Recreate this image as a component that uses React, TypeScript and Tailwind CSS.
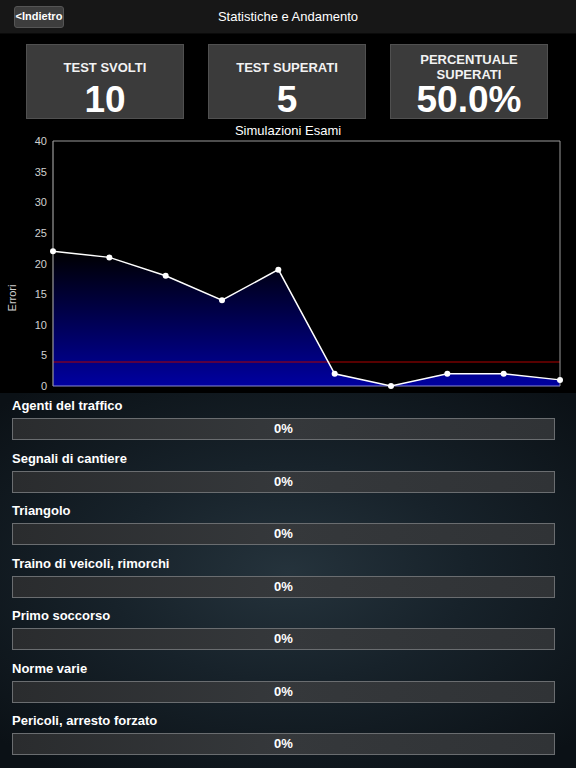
import React from 'react';

const stats = [
    { title: ['TEST SVOLTI'], value: '10' },
    { title: ['TEST SUPERATI'], value: '5' },
    { title: ['PERCENTUALE', 'SUPERATI'], value: '50.0%' },
];

const errors = [22, 21, 18, 14, 19, 2, 0, 2, 2, 1];

const categories = [
    'Agenti del traffico',
    'Segnali di cantiere',
    'Triangolo',
    'Traino di veicoli, rimorchi',
    'Primo soccorso',
    'Norme varie',
    'Pericoli, arresto forzato',
    'Pericolosità del veicolo',
];

// plot frame in svg coords
const X0 = 53;
const X1 = 560;
const Y0 = 8;
const Y1 = 253;
const yOf = (v: number) => Y1 - (v / 40) * (Y1 - Y0);
const xOf = (i: number) => X0 + (i * (X1 - X0)) / (errors.length - 1);

const Chart: React.FC = () => {
    const pts = errors.map((v, i) => `${xOf(i)},${yOf(v)}`).join(' ');
    const area = `${X0},${Y1} ${pts} ${X1},${Y1}`;

    return (
        <svg width={576} height={260} className="block -mt-[5px]">
            <defs>
                <linearGradient id="fill" x1="0" y1="0" x2="0" y2="1">
                    <stop offset="0" stopColor="#000000" />
                    <stop offset="0.5" stopColor="#000050" />
                    <stop offset="1" stopColor="#0000a0" />
                </linearGradient>
            </defs>

            {/* y axis labels */}
            {[0, 5, 10, 15, 20, 25, 30, 35, 40].map((v) => (
                <text
                    key={v}
                    x={47}
                    y={yOf(v) + 4}
                    textAnchor="end"
                    fontSize={11}
                    fill="#d0d0d0"
                    fontFamily="Liberation Sans, Arial, sans-serif"
                >
                    {v}
                </text>
            ))}
            <text
                x={0}
                y={0}
                transform="translate(16 165) rotate(-90)"
                textAnchor="middle"
                fontSize={11}
                fill="#d0d0d0"
                fontFamily="Liberation Sans, Arial, sans-serif"
            >
                Errori
            </text>

            <polygon points={area} fill="url(#fill)" />
            <line x1={X0} y1={Math.round(yOf(4))} x2={X1} y2={Math.round(yOf(4))} stroke="#b00000" strokeWidth={1.2} />

            {/* frame */}
            <line x1={X0} y1={Y0} x2={X1} y2={Y0} stroke="#9a9a9a" strokeWidth={1} />
            <line x1={X0} y1={Y0} x2={X0} y2={Y1} stroke="#9a9a9a" strokeWidth={1.2} />
            <line x1={X1} y1={Y0} x2={X1} y2={Y1} stroke="#9a9a9a" strokeWidth={1} />
            <line x1={X0} y1={Y1} x2={X1} y2={Y1} stroke="#8a8ad0" strokeWidth={1.2} />

            <polyline points={pts} fill="none" stroke="#ffffff" strokeWidth={1.5} />
            {errors.map((v, i) => (
                <circle key={i} cx={xOf(i)} cy={yOf(v)} r={3} fill="#ffffff" />
            ))}
        </svg>
    );
};

const App: React.FC = () => {
    return (
        <div className="w-[576px] h-[768px] overflow-hidden bg-black text-white font-['Liberation_Sans',Arial,sans-serif]">
            {/* Nav bar */}
            <div className="relative h-[34px] bg-[#171717] border-b border-[#0a0a0a] flex items-center">
                <button className="ml-[14px] h-[22px] w-[50px] bg-[#3d3d3d] border border-[#555] rounded-[3px] text-[11px] font-bold text-white leading-none">
                    &lt;Indietro
                </button>
                <div className="absolute inset-0 flex items-center justify-center text-[13px] pointer-events-none">
                    Statistiche e Andamento
                </div>
            </div>

            {/* Summary + chart */}
            <div className="bg-black">
                <div className="grid grid-cols-[158px_158px_158px] gap-x-[24px] pl-[26px] pt-[10px]">
                    {stats.map((s) => (
                        <div
                            key={s.value}
                            className="h-[75px] bg-[#3b3b3b] border border-[#505050] flex flex-col items-center"
                        >
                            <div
                                className={`h-[37px] flex flex-col items-center justify-center text-[13px] font-bold leading-[15px] text-center text-[#f2f2f2] ${
                                    s.title.length > 1 ? 'pt-[6px]' : 'pt-[8px]'
                                }`}
                            >
                                {s.title.map((t) => (
                                    <div key={t}>{t}</div>
                                ))}
                            </div>
                            <div className="font-bold text-[37px] leading-[36px]">{s.value}</div>
                        </div>
                    ))}
                </div>
                <div className="text-center text-[13px] leading-[14px] mt-[5px]">Simulazioni Esami</div>
                <Chart />
            </div>

            {/* Category progress */}
            <div className="h-[400px] bg-[radial-gradient(ellipse_70%_60%_at_50%_45%,#25333c_0%,#17222a_45%,#0b1116_100%)] pt-[5px]">
                {categories.map((c) => (
                    <div key={c} className="pl-[12px] pr-[21px] mb-[10.5px]">
                        <div className="text-[13px] font-bold leading-[16px] mb-[4px] text-white">{c}</div>
                        <div className="h-[22px] border border-[#6a6d70] bg-[linear-gradient(90deg,#2a2c2e_0%,#35383b_50%,#303336_100%)] flex items-center justify-center">
                            <span className="text-[13px] font-bold">0%</span>
                        </div>
                    </div>
                ))}
            </div>
        </div>
    );
};

export default App;
